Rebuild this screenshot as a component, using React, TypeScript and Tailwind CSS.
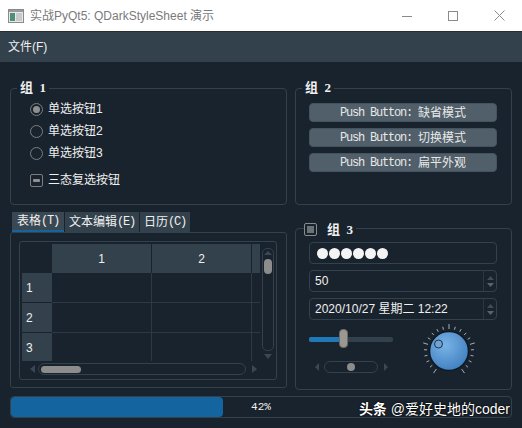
import React from 'react';

const SANS = "font-['Liberation_Sans','Noto_Sans_CJK_SC',sans-serif]";
const MONO = "font-['Liberation_Mono','Noto_Sans_CJK_SC',monospace]";

function TitleBar() {
  return (
    <div className="h-[31px] bg-white flex items-center">
      <svg className="ml-[8px] w-[16px] h-[14px]" viewBox="0 0 16 14">
        <rect x="0.5" y="0.5" width="15" height="13" fill="#e8e8e8" stroke="#8a8a8a" />
        <rect x="1" y="1" width="14" height="2" fill="#9a9a9a" />
        <rect x="2" y="4" width="5" height="8" fill="#4e8f7a" />
        <rect x="8" y="4" width="6" height="8" fill="#c9c9c9" />
      </svg>
      <span className="ml-[6px] text-[12px] text-[#7a7a7a]">实战PyQt5: QDarkStyleSheet 演示</span>
      <div className="ml-auto flex h-full">
        <div className="w-[46px] h-full flex items-center justify-center">
          <svg width="10" height="10" viewBox="0 0 10 10">
            <line x1="0" y1="5.5" x2="10" y2="5.5" stroke="#8a8a8a" strokeWidth="1" />
          </svg>
        </div>
        <div className="w-[46px] h-full flex items-center justify-center">
          <svg width="10" height="10" viewBox="0 0 10 10">
            <rect x="0.5" y="0.5" width="9" height="9" fill="none" stroke="#8a8a8a" strokeWidth="1" />
          </svg>
        </div>
        <div className="w-[46px] h-full flex items-center justify-center">
          <svg width="11" height="11" viewBox="0 0 11 11">
            <path d="M0.5 0.5 L10.5 10.5 M10.5 0.5 L0.5 10.5" stroke="#8a8a8a" strokeWidth="1" />
          </svg>
        </div>
      </div>
    </div>
  );
}

function GroupTitle({ label, num }: { label: string; num: string }) {
  return (
    <span className="absolute -top-[9px] left-[6px] px-[3px] bg-[#19232D] text-[#F0F0F0] text-[13px] font-bold leading-[16px] font-['Liberation_Serif','Noto_Sans_CJK_SC',serif]">
      {label}&nbsp; {num}
    </span>
  );
}

function Radio({ checked, label }: { checked?: boolean; label: string }) {
  return (
    <div className="h-[22px] flex items-center">
      <span className="w-[13px] h-[13px] rounded-full border border-[#7d7d7d] flex items-center justify-center">
        {checked && <span className="w-[7px] h-[7px] rounded-full bg-[#8f8f8f]" />}
      </span>
      <span className="ml-[5px] text-[12px] text-[#F0F0F0]">{label}</span>
    </div>
  );
}

function PushButton({ text }: { text: string }) {
  return (
    <div className="h-[19px] rounded-[4px] bg-[#505F69] border border-[#445360] flex items-center justify-center text-[#E8E8E8]">
      <span className={`${MONO} text-[12px] tracking-[-1.2px]`}>Push Button:</span>
      <span className="ml-[6px] text-[12px]">{text}</span>
    </div>
  );
}

function SpinArrows() {
  return (
    <div className="w-[13px] h-full flex flex-col items-center justify-center gap-[3px] border-l border-[#2a3640]">
      <svg width="7" height="4" viewBox="0 0 7 4"><path d="M0 4 L3.5 0 L7 4 Z" fill="#3e4c57" /></svg>
      <svg width="7" height="4" viewBox="0 0 7 4"><path d="M0 0 L3.5 4 L7 0 Z" fill="#56646f" /></svg>
    </div>
  );
}

function Dial() {
  const ticks = [];
  for (let i = 0; i <= 20; i++) {
    const a = ((-145 + i * 14.5) * Math.PI) / 180;
    const r1 = 22;
    const r2 = i % 5 === 0 ? 27 : 25;
    ticks.push(
      <line
        key={i}
        x1={30 + r1 * Math.sin(a)}
        y1={30 - r1 * Math.cos(a)}
        x2={30 + r2 * Math.sin(a)}
        y2={30 - r2 * Math.cos(a)}
        stroke="#a7b0b8"
        strokeWidth="1"
      />
    );
  }
  return (
    <svg width="60" height="60" viewBox="0 0 60 60">
      <defs>
        <radialGradient id="dg" cx="0.4" cy="0.35" r="0.7">
          <stop offset="0" stopColor="#7ab3e6" />
          <stop offset="1" stopColor="#3f7fc0" />
        </radialGradient>
      </defs>
      {ticks}
      <circle cx="30" cy="30" r="19.5" fill="url(#dg)" stroke="#0f1a24" strokeWidth="1.5" />
      <circle cx="19.5" cy="23" r="4" fill="#6ea4d6" stroke="#22313e" strokeWidth="1" />
    </svg>
  );
}

function TablePane() {
  const rows = ['1', '2', '3'];
  return (
    <div className="w-[277px] h-[156px] border border-[#32414B] rounded-[3px] pt-[8px] pl-[8px]">
      <div className="w-[258px] h-[139px] border border-[#32414B] rounded-[3px] p-[2px] flex flex-col">
        <div className="flex h-[117px]">
          <div className="w-[238px] flex flex-col overflow-hidden">
            <div className="h-[29px] flex shrink-0">
              <div className="w-[30px]" />
              <div className="w-[100px] bg-[#32414B] border-r border-[#19232D] flex items-center justify-center text-[12px] text-[#F0F0F0]">1</div>
              <div className="w-[100px] bg-[#32414B] border-r border-[#19232D] flex items-center justify-center text-[12px] text-[#F0F0F0]">2</div>
              <div className="flex-1 bg-[#32414B]" />
            </div>
            {rows.map((r) => (
              <div key={r} className="h-[30px] flex shrink-0">
                <div className="w-[30px] bg-[#32414B] border-b border-[#19232D] flex items-center pl-[4px] text-[12px] text-[#F0F0F0]">{r}</div>
                <div className="w-[100px] border-r border-b border-[#2d3a44]" />
                <div className="w-[100px] border-r border-b border-[#2d3a44]" />
                <div className="flex-1 border-b border-[#2d3a44]" />
              </div>
            ))}
          </div>
          <div className="ml-[2px] w-[12px] flex flex-col items-center pt-[4px] pb-[2px]">
            <div className="w-[12px] flex-1 rounded-[5px] border border-[#32414B] flex flex-col items-center pt-[2px]">
              <svg width="8" height="4" viewBox="0 0 8 4"><path d="M0 4 L4 0 L8 4 Z" fill="#3b4853" /></svg>
              <div className="mt-[4px] w-[8px] h-[15px] rounded-[4px] bg-[#8c8c8c]" />
            </div>
            <svg className="mt-[3px]" width="8" height="5" viewBox="0 0 8 5"><path d="M0 0 L4 5 L8 0 Z" fill="#3b4853" /></svg>
          </div>
        </div>
        <div className="h-[16px] flex items-center pl-[8px]">
          <svg width="5" height="8" viewBox="0 0 5 8"><path d="M5 0 L0 4 L5 8 Z" fill="#3b4853" /></svg>
          <div className="ml-[3px] w-[208px] h-[12px] rounded-[6px] border border-[#32414B] flex items-center pl-[2px]">
            <div className="w-[40px] h-[7px] rounded-[4px] bg-[#8c8c8c]" />
          </div>
          <svg className="ml-[6px]" width="5" height="8" viewBox="0 0 5 8"><path d="M0 0 L5 4 L0 8 Z" fill="#3b4853" /></svg>
        </div>
      </div>
    </div>
  );
}

export default function App() {
  return (
    <div className={`relative w-[522px] h-[428px] bg-[#19232D] flex flex-col overflow-hidden ${SANS}`}>
      <TitleBar />
      <div className="h-px bg-[#2b2b2b]" />
      <div className="h-[30px] bg-[#32414B] flex items-center pl-[8px] text-[12px] text-[#F0F0F0]">文件(F)</div>

      <div className="flex-1 flex flex-col px-[10px] pt-[26px] pb-[10px]">
        {/* row 1 */}
        <div className="flex gap-[8px] h-[117px]">
          <div className="relative w-[277px] h-full border border-[#32414B] rounded-[4px] pt-[9px] pl-[19px]">
            <GroupTitle label="组" num="1" />
            <Radio checked label="单选按钮1" />
            <Radio label="单选按钮2" />
            <Radio label="单选按钮3" />
            <div className="h-[22px] mt-[5px] flex items-center">
              <span className="w-[13px] h-[13px] rounded-[2px] border border-[#7d7d7d] flex items-center justify-center">
                <span className="w-[7px] h-[3px] rounded-[1px] bg-[#8f8f8f]" />
              </span>
              <span className="ml-[5px] text-[12px] text-[#F0F0F0]">三态复选按钮</span>
            </div>
          </div>
          <div className="relative w-[217px] h-full border border-[#32414B] rounded-[4px] pt-[14px] pl-[13px] pr-[14px] flex flex-col gap-[6px]">
            <GroupTitle label="组" num="2" />
            <PushButton text="缺省模式" />
            <PushButton text="切换模式" />
            <PushButton text="扁平外观" />
          </div>
        </div>

        {/* row 2 */}
        <div className="flex gap-[8px] h-[178px] mt-[7px]">
          <div className="w-[277px] flex flex-col">
            <div className="h-[20px] flex pl-[2px] gap-[1px] text-[12px] text-[#F0F0F0]">
              <div className="px-[5px] bg-[#3a4853] border-b-2 border-[#1464A0] flex items-center">
                表格<span className={`${MONO} tracking-[-1.2px]`}>(T)</span>
              </div>
              <div className="px-[4px] bg-[#32414B] flex items-center">
                文本编辑<span className={`${MONO} tracking-[-1.2px]`}>(E)</span>
              </div>
              <div className="px-[4px] bg-[#32414B] flex items-center">
                日历<span className={`${MONO} tracking-[-1.2px]`}>(C)</span>
              </div>
            </div>
            <TablePane />
          </div>

          <div className="w-[217px] pt-[16px]">
            <div className="relative h-[162px] border border-[#32414B] rounded-[4px] pt-[13px] pl-[13px] pr-[14px]">
              <div className="absolute -top-[9px] left-[8px] pr-[3px] bg-[#19232D] flex items-center">
                <span className="w-[13px] h-[13px] rounded-[2px] border border-[#8a8a8a] flex items-center justify-center">
                  <span className="w-[7px] h-[7px] bg-[#6b737a]" />
                </span>
                <span className="ml-[10px] text-[#F0F0F0] text-[13px] font-bold font-['Liberation_Serif','Noto_Sans_CJK_SC',serif]">组&nbsp; 3</span>
              </div>
              <div className="flex flex-col gap-[6px]">
                <div className="h-[22px] border border-[#32414B] rounded-[4px] flex items-center pl-[7px] gap-[1px]">
                  {[0, 1, 2, 3, 4, 5].map((i) => (
                    <span key={i} className="w-[11px] h-[11px] rounded-full bg-[#F4F4F4]" />
                  ))}
                </div>
                <div className="h-[22px] border border-[#32414B] rounded-[4px] flex items-center">
                  <span className="flex-1 pl-[5px] text-[12px] text-[#F0F0F0]">50</span>
                  <SpinArrows />
                </div>
                <div className="h-[22px] border border-[#32414B] rounded-[4px] flex items-center">
                  <span className="flex-1 pl-[5px] text-[12px] text-[#F0F0F0]">2020/10/27 星期二 12:22</span>
                  <SpinArrows />
                </div>
              </div>
              <div className="flex mt-[9px]">
                <div className="w-[84px] flex flex-col">
                  <div className="relative h-[19px]">
                    <div className="absolute top-[8px] left-0 w-[84px] h-[5px] rounded-[2px] bg-[#32414B]" />
                    <div className="absolute top-[8px] left-0 w-[34px] h-[5px] rounded-[2px] bg-[#1f78b8]" />
                    <div className="absolute top-0 left-[30px] w-[9px] h-[19px] rounded-[4px] bg-[#9b9792] border border-[#6d6a66]" />
                  </div>
                  <div className="mt-[13px] h-[12px] flex items-center pl-[6px]">
                    <svg width="4" height="8" viewBox="0 0 4 8"><path d="M4 0 L0 4 L4 8 Z" fill="#3b4853" /></svg>
                    <div className="ml-[5px] w-[54px] h-[12px] rounded-[6px] border border-[#32414B] flex items-center justify-center">
                      <span className="w-[8px] h-[8px] rounded-full bg-[#8c8c8c]" />
                    </div>
                    <svg className="ml-[6px]" width="4" height="8" viewBox="0 0 4 8"><path d="M0 0 L4 4 L0 8 Z" fill="#3b4853" /></svg>
                  </div>
                </div>
                <div className="ml-[26px] -mt-[8px]">
                  <Dial />
                </div>
              </div>
            </div>
          </div>
        </div>

        {/* progress */}
        <div className="relative h-[22px] mt-[6px] border border-[#32414B] rounded-[4px]">
          <div className="w-[212px] h-full rounded-[4px] bg-[#1464A0]" />
          <div className={`absolute inset-0 flex items-center justify-center text-[11px] text-[#F0F0F0] ${MONO}`}>42%</div>
        </div>
      </div>

      <div className="absolute right-[12px] bottom-[10px] text-[14px] leading-[18px] text-white [text-shadow:0_0_2px_#000,0_0_1px_#000]">
        <span className="font-bold">头条</span> @爱好史地的coder
      </div>
    </div>
  );
}
